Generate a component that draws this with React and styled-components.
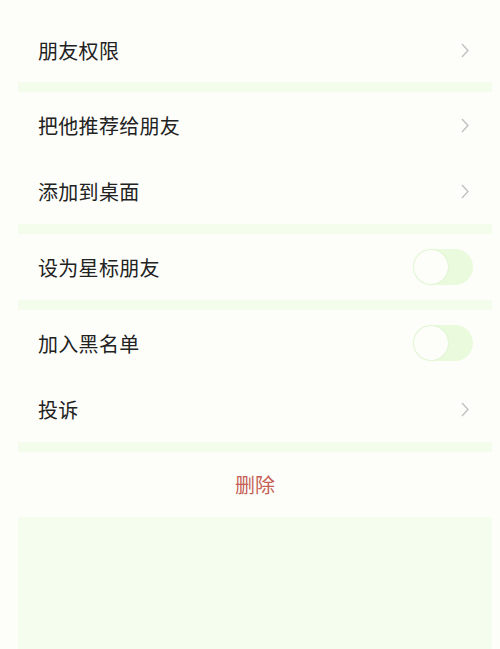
import React, { useState } from 'react';
import styled, { createGlobalStyle } from 'styled-components';

const GlobalStyle = createGlobalStyle`
  html, body {
    margin: 0;
    padding: 0;
    background: #fdfefa;
    font-family: "Noto Sans CJK SC", "Noto Sans", sans-serif;
  }
`;

const Page = styled.div`
  width: 500px;
  height: 649px;
  overflow: hidden;
  background: #fdfefa;
  padding: 18px 8px 0 18px;
  box-sizing: border-box;
`;

const Group = styled.div`
  display: flex;
  flex-direction: column;
  background: #fdfefa;
`;

const Gap = styled.div`
  height: 10px;
  background: #f4fdec;
`;

const Row = styled.div`
  display: flex;
  align-items: center;
  justify-content: space-between;
  height: ${p => p.h || 66}px;
  padding: 0 22px 0 20px;
  box-sizing: border-box;
`;

const Label = styled.span`
  font-size: 20px;
  color: #222;
  letter-spacing: 0.3px;
`;

const Chevron = styled.svg`
  width: 10px;
  height: 17px;
`;

const Track = styled.button`
  position: relative;
  width: 60px;
  height: 36px;
  border: none;
  padding: 0;
  border-radius: 18px;
  background: ${p => (p.on ? '#7fd36b' : '#e9fbdc')};
  margin-right: -3px;
  cursor: pointer;
`;

const Knob = styled.span`
  position: absolute;
  top: 1px;
  left: ${p => (p.on ? '25px' : '1px')};
  width: 34px;
  height: 34px;
  border-radius: 50%;
  background: #fdfefa;
  box-shadow: 0 0 2px rgba(205, 232, 195, 0.8);
`;

const DeleteRow = styled(Row)`
  justify-content: center;
  padding: 0;
`;

const DeleteText = styled.span`
  font-size: 20px;
  color: #c55f55;
`;

const Footer = styled.div`
  height: 140px;
  background: #f4fdee;
`;

const Arrow = () => (
  <Chevron viewBox="0 0 10 17">
    <polyline points="2,2 8,8.5 2,15" fill="none" stroke="#c2c2c2" strokeWidth="1.4" />
  </Chevron>
);

const Toggle = ({ on, onClick }) => (
  <Track on={on} onClick={onClick}>
    <Knob on={on} />
  </Track>
);

export default function App() {
  const [star, setStar] = useState(false);
  const [block, setBlock] = useState(false);

  return (
    <Page>
      <GlobalStyle />
      <Group>
        <Row h={64}>
          <Label>朋友权限</Label>
          <Arrow />
        </Row>
      </Group>
      <Gap />
      <Group>
        <Row>
          <Label>把他推荐给朋友</Label>
          <Arrow />
        </Row>
        <Row>
          <Label>添加到桌面</Label>
          <Arrow />
        </Row>
      </Group>
      <Gap />
      <Group>
        <Row>
          <Label>设为星标朋友</Label>
          <Toggle on={star} onClick={() => setStar(!star)} />
        </Row>
      </Group>
      <Gap />
      <Group>
        <Row>
          <Label>加入黑名单</Label>
          <Toggle on={block} onClick={() => setBlock(!block)} />
        </Row>
        <Row>
          <Label>投诉</Label>
          <Arrow />
        </Row>
      </Group>
      <Gap />
      <DeleteRow h={65}>
        <DeleteText>删除</DeleteText>
      </DeleteRow>
      <Footer />
    </Page>
  );
}
